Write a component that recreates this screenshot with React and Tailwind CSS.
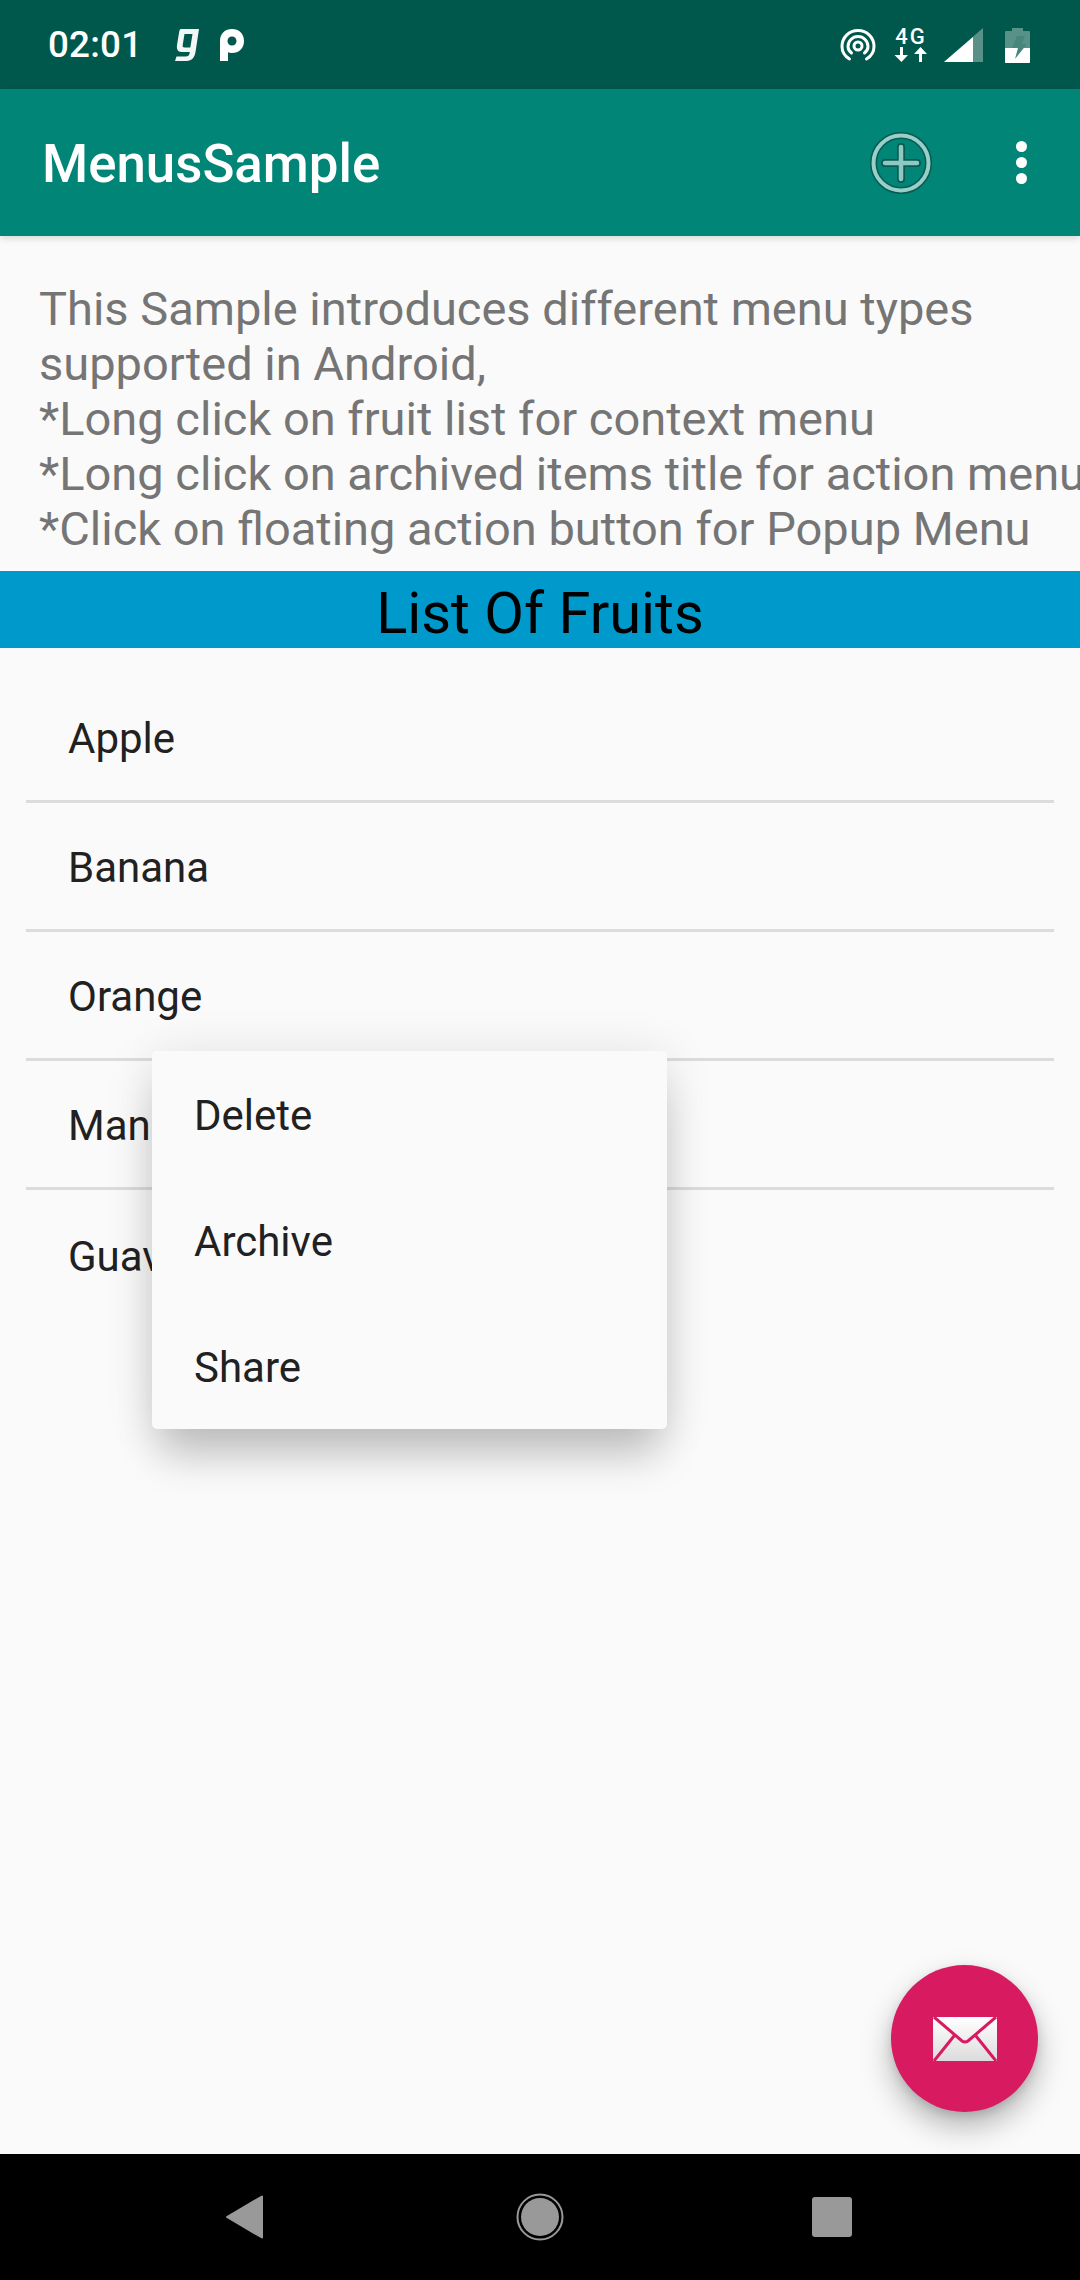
const rows = ["Apple", "Banana", "Orange", "Mango", "Guava"];
const lines = [
  "This Sample introduces different menu types",
  "supported in Android,",
  "*Long click on fruit list for context menu",
  "*Long click on archived items title for action menu",
  "*Click on floating action button for Popup Menu",
];

function StatusLeft() {
  return (
    <div className="flex items-center">
      <span className="text-[36.75px] leading-[44px] font-medium text-[#ffffff] ml-[48px] tracking-[0.2px]">02:01</span>
      <svg className="ml-[32px]" width="26" height="34" viewBox="0 0 26 34">
        <path d="M7 1h18l-3.500 23c-.7 5-3.600 9-9 9H1l1.500-4.500h9c3 0 4-1.500 4.300-4.500H7.500C3.500 24 2.500 21 3 17L5 5c.3-2.500 1-4 2-4zm3.500 5L8.700 17c-.3 1.800.3 2.500 1.800 2.500h5.800L18.500 6z" fill="#f2f7f6" />
      </svg>
      <svg className="ml-[19px]" width="26" height="34" viewBox="0 0 26 34">
        <path d="M1 33V13C1 5.500 6 1 13 1s12 4.500 12 12-5 12-12 12c-1.500 0-3-.3-4-.8V33zM13 8.500c-2.700 0-4.500 2-4.500 4.500s1.800 4.500 4.500 4.500 4.500-2 4.500-4.500-1.800-4.500-4.500-4.500z" fill="#fff" fillRule="evenodd" />
      </svg>
    </div>
  );
}

function StatusRight() {
  return (
    <div className="flex items-center mr-[50px]">
      <svg width="36" height="34" viewBox="0 0 36 34" fill="none" stroke="#fff" strokeLinecap="round">
        <path d="M9.500 31C4.500 28 2 23.500 2 18.500 2 9.500 9 2.500 18 2.500s16 7 16 16c0 5-2.500 9.500-7.500 12.500" strokeWidth="3" />
        <path d="M11.500 25C9 23 8 21 8 18.500 8 13 12.500 8.500 18 8.500S28 13 28 18.500c0 2.500-1 4.500-3.500 6.500" strokeWidth="3" />
        <circle cx="18" cy="18" r="4" strokeWidth="3" />
      </svg>
      <div className="ml-[17px] w-[36px] h-[36px] flex flex-col items-center">
        <span className="text-[22px] leading-[20px] font-medium text-white tracking-[2px]">4G</span>
        <svg width="36" height="16" viewBox="0 0 36 16" fill="#fff">
          <path d="M7 0h3v8h5l-6.500 7L1.500 8H7zM26 15h3V7h5L27.500 0 21 7h5z" />
        </svg>
      </div>
      <svg className="ml-[15px]" width="40" height="36" viewBox="0 0 40 36">
        <path d="M0 35L39 1v34z" fill="#fff" fillOpacity="0.35" />
        <path d="M0 35L29 10v25z" fill="#fff" />
      </svg>
      <svg className="ml-[21px]" width="25" height="36" viewBox="0 0 25 36">
        <path d="M7 1h11v3h6a1 1 0 0 1 1 1v30a1 1 0 0 1-1 1H1a1 1 0 0 1-1-1V5a1 1 0 0 1 1-1h6z" fill="#fff" fillOpacity="0.35" />
        <path d="M0 21h25v14a1 1 0 0 1-1 1H1a1 1 0 0 1-1-1z" fill="#fff" />
        <path d="M12 9h8l-3 8h5l-12 15 3-11H7z" fill="#47867c" />
      </svg>
    </div>
  );
}

export default function App() {
  return (
    <div className="relative w-[1080px] h-[2280px] flex flex-col overflow-hidden bg-[#fafafa] font-['Roboto',sans-serif]">
      <header className="h-[89px] shrink-0 bg-[#00574b] flex items-center justify-between">
        <StatusLeft />
        <StatusRight />
      </header>

      <div className="h-[147px] shrink-0 bg-[#008577] flex items-center justify-between shadow-[0_3px_6px_rgba(0,0,0,0.12)] relative">
        <h1 className="ml-[42px] pt-[2px] text-[52.8px] leading-[60px] font-medium text-white">MenusSample</h1>
        <div className="flex items-center">
          <svg width="62" height="62" viewBox="0 0 62 62" fill="none">
            <circle cx="31" cy="31" r="27.500" stroke="#0b5a52" strokeWidth="7" />
            <circle cx="31" cy="31" r="27.500" stroke="#96d0c9" strokeWidth="4" />
            <path d="M31 15v32M15 31h32" stroke="#0b5a52" strokeWidth="8" strokeLinecap="round" />
            <path d="M31 15v32M15 31h32" stroke="#8cc9c2" strokeWidth="4.500" strokeLinecap="round" />
          </svg>
          <div className="ml-[84px] mr-[53px] flex flex-col gap-[5px]">
            <span className="w-[11px] h-[11px] rounded-full bg-white" />
            <span className="w-[11px] h-[11px] rounded-full bg-white" />
            <span className="w-[11px] h-[11px] rounded-full bg-white" />
          </div>
        </div>
      </div>

      <section className="pt-[45px] pl-[39px] pb-[15px] text-[47px] leading-[55px] text-[#757575] whitespace-nowrap">
        {lines.map((l) => (
          <p key={l}>{l}</p>
        ))}
      </section>

      <div className="h-[77px] shrink-0 pt-[4px] bg-[#0099cc] text-black text-center text-[57.75px] leading-[77px]">List Of Fruits</div>

      <ul className="px-[26px] pt-[26px]">
        {rows.map((r, i) => (
          <li
            key={r}
            className={`h-[129px] flex items-center pl-[42px] pt-[3px] text-[42px] text-[#212121] ${i < 4 ? "border-b-[3px] border-[#dcdcdc]" : ""}`}
          >
            {r}
          </li>
        ))}
      </ul>

      <div className="absolute left-[152px] top-[1051px] w-[515px] rounded-[5px] bg-[#fafafa] shadow-[0_34px_40px_-8px_rgba(0,0,0,0.2),0_4px_50px_0_rgba(0,0,0,0.11)]">
        {["Delete", "Archive", "Share"].map((m) => (
          <div key={m} className="h-[126px] flex items-center pl-[42px] pt-[2px] text-[42px] text-[#212121]">{m}</div>
        ))}
      </div>

      <button className="absolute left-[891px] top-[1965px] w-[147px] h-[147px] rounded-full bg-[#d81b60] flex items-center justify-center shadow-[0_15px_30px_rgba(0,0,0,0.28),0_4px_10px_rgba(0,0,0,0.12)]">
        <svg width="64" height="44" viewBox="0 0 64 44">
          <defs>
            <linearGradient id="env" x1="0" y1="0" x2="0" y2="1">
              <stop offset="0" stopColor="#ffffff" />
              <stop offset="1" stopColor="#dcdcdc" />
            </linearGradient>
          </defs>
          <rect width="64" height="44" fill="url(#env)" />
          <path d="M1 0l28 24q3 2 6 0L63 0M1 44l20-25M63 44L43 19" fill="none" stroke="#d81b60" strokeWidth="3" />
        </svg>
      </button>

      <nav className="absolute left-0 right-0 bottom-0 h-[126px] bg-black flex items-center justify-between pl-[225px] pr-[228px]">
        <svg width="39" height="44" viewBox="0 0 39 44">
          <path d="M37 1.500v41L2 22z" fill="#999" stroke="#999" strokeWidth="2" strokeLinejoin="round" />
        </svg>
        <svg className="ml-[4px]" width="48" height="48" viewBox="0 0 48 48">
          <circle cx="24" cy="24" r="22.500" fill="none" stroke="#999" strokeWidth="2" />
          <circle cx="24" cy="24" r="19" fill="#999" />
        </svg>
        <div className="w-[40px] h-[40px] rounded-[3px] bg-[#999]" />
      </nav>
    </div>
  );
}
